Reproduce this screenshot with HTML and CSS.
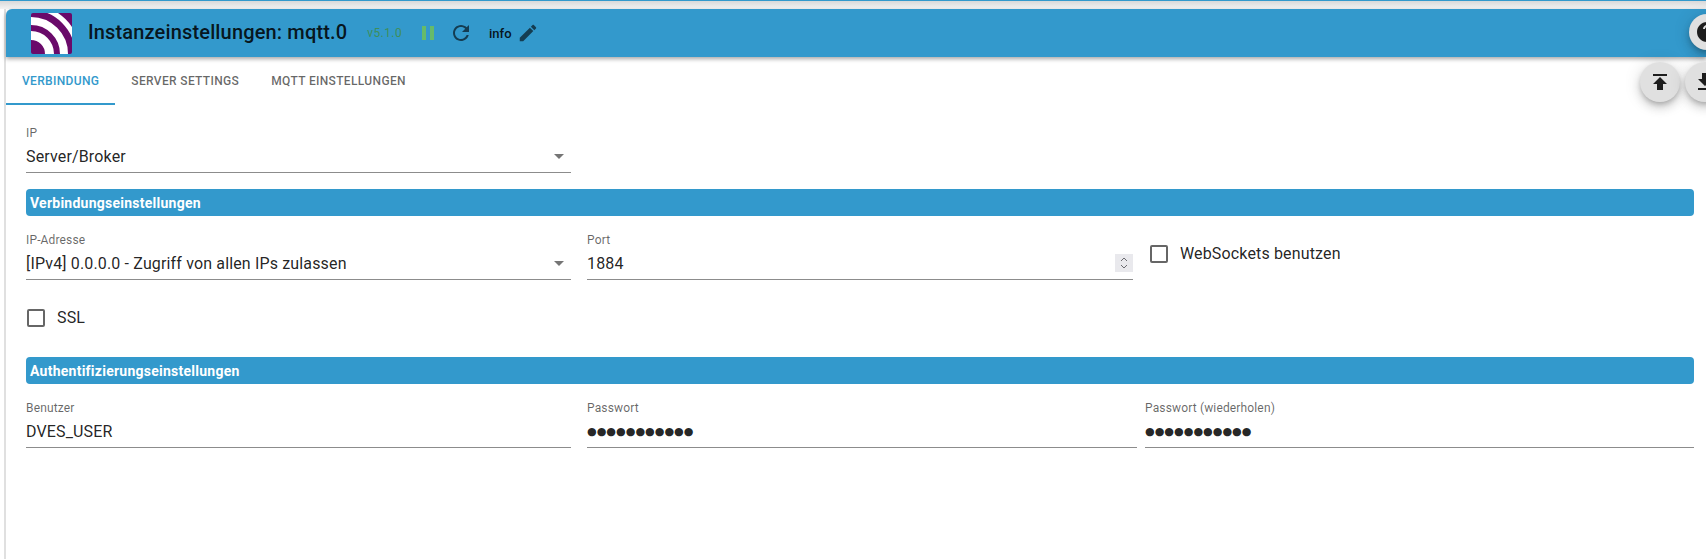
FILE: index.html
```html
<!DOCTYPE html>
<html lang="de">
<head>
  <meta charset="UTF-8">
  <title>Instanzeinstellungen: mqtt.0</title>
  <link rel="stylesheet" href="styles.css">
</head>
<body>
  <div class="top-strip"></div>

  <div class="dialog">
    <header class="title-bar">
      <svg class="logo" viewBox="0 0 41 41">
        <rect width="41" height="41" rx="2" fill="#6a0a6a"/>
        <path d="M0 22.500a18.500 18.500 0 0 1 18.500 18.500" fill="none" stroke="#fff" stroke-width="9"/>
        <path d="M0 8a33 33 0 0 1 33 33" fill="none" stroke="#fff" stroke-width="8"/>
        <path d="M0 -5.500a46.500 46.500 0 0 1 46.500 46.500" fill="none" stroke="#fff" stroke-width="5"/>
      </svg>
      <h1 class="title">Instanzeinstellungen: mqtt.0</h1>
      <span class="version">v5.1.0</span>
      <svg class="icon icon-pause" viewBox="0 0 24 24"><path d="M6 19h4V5H6v14zm8-14v14h4V5h-4z"/></svg>
      <svg class="icon icon-reload" viewBox="0 0 24 24"><path d="M17.650 6.350C16.200 4.900 14.210 4 12 4c-4.420 0-7.990 3.580-7.990 8s3.570 8 7.990 8c3.730 0 6.840-2.550 7.730-6h-2.080c-.82 2.330-3.040 4-5.650 4-3.310 0-6-2.690-6-6s2.690-6 6-6c1.660 0 3.140.69 4.220 1.780L13 11h7V4l-2.350 2.350z"/></svg>
      <span class="log-level">info</span>
      <svg class="icon icon-edit" viewBox="0 0 24 24"><path d="M3 17.250V21h3.750L17.810 9.940l-3.750-3.750L3 17.250zM20.710 7.040c.39-.39.39-1.020 0-1.410l-2.340-2.340c-.39-.39-1.020-.39-1.410 0l-1.830 1.830 3.750 3.750 1.830-1.830z"/></svg>
    </header>

    <nav class="tabs">
      <div class="tab active">Verbindung</div>
      <div class="tab">Server settings</div>
      <div class="tab">MQTT Einstellungen</div>
    </nav>

    <main class="content">
      <div class="row row-single">
        <div class="field">
          <label>IP</label>
          <div class="value select">Server/Broker</div>
        </div>
      </div>

      <div class="section-bar">Verbindungseinstellungen</div>

      <div class="row row-conn">
        <div class="field">
          <label>IP-Adresse</label>
          <div class="value select">[IPv4] 0.0.0.0 - Zugriff von allen IPs zulassen</div>
        </div>
        <div class="field">
          <label>Port</label>
          <div class="value">1884
            <span class="spinner">
              <svg viewBox="0 0 10 18"><path d="M2 7l3-3 3 3M2 11l3 3 3-3" fill="none" stroke="#6b6b70" stroke-width="1"/></svg>
            </span>
          </div>
        </div>
        <div class="check check-ws"><span class="box"></span>WebSockets benutzen</div>
      </div>

      <div class="check check-ssl"><span class="box"></span>SSL</div>

      <div class="section-bar">Authentifizierungseinstellungen</div>

      <div class="row row-auth">
        <div class="field">
          <label>Benutzer</label>
          <div class="value">DVES_USER</div>
        </div>
        <div class="field">
          <label>Passwort</label>
          <div class="value dots">●●●●●●●●●●●</div>
        </div>
        <div class="field">
          <label>Passwort (wiederholen)</label>
          <div class="value dots">●●●●●●●●●●●</div>
        </div>
      </div>
    </main>
  </div>

  <button class="fab fab-help"><svg viewBox="0 0 24 24"><path d="M12 2C6.480 2 2 6.480 2 12s4.480 10 10 10 10-4.480 10-10S17.520 2 12 2zm1 17h-2v-2h2v2zm2.070-7.750l-.9.920C13.450 12.900 13 13.500 13 15h-2v-.5c0-1.100.45-2.100 1.170-2.830l1.240-1.260c.37-.36.59-.86.59-1.410 0-1.100-.9-2-2-2s-2 .9-2 2H8c0-2.210 1.790-4 4-4s4 1.790 4 4c0 .88-.36 1.680-.93 2.250z"/></svg></button>
  <button class="fab fab-upload"><svg viewBox="0 0 24 24"><path d="M5 4v2h14V4H5zm0 10h4v6h6v-6h4l-7-7-7 7z"/></svg></button>
  <button class="fab fab-download"><svg viewBox="0 0 24 24"><path d="M19 9h-4V3H9v6H5l7 7 7-7zM5 18v2h14v-2H5z"/></svg></button>
</body>
</html>
```

FILE: styles.css
```css
html, body {
  margin: 0;
  height: 100%;
  overflow: hidden;
  background: white;
  font-family: Roboto, 'Liberation Sans', sans-serif;
  color: rgba(0, 0, 0, 0.87);
}

.top-strip {
  height: 9px;
  box-sizing: border-box;
  border-top: 1px solid #3399cc;
  background: linear-gradient(#d9d9d9, #f4f4f4);
}

.dialog {
  margin-left: 4px;
  height: 550px;
  border-left: 2px solid #e0e0e0;
}

.title-bar {
  display: flex;
  align-items: center;
  height: 48px;
  background: #3399cc;
  border-top-left-radius: 6px;
  box-shadow: 0 2px 4px rgba(0, 0, 0, 0.35);
  position: relative;
}

.logo {
  width: 41px;
  height: 41px;
  margin-left: 25px;
}

.title {
  margin: 0 0 2px 16px;
  font-size: 20px;
  font-weight: 500;
  letter-spacing: 0.15px;
  color: rgba(0, 0, 0, 0.87);
}

.version {
  margin-left: 20px;
  font-size: 12px;
  letter-spacing: 0.4px;
  color: #3f8f5a;
}

.icon {
  width: 24px;
  height: 24px;
  fill: rgba(0, 0, 0, 0.6);
}

.icon-pause {
  margin-left: 14px;
  fill: #66bb6a;
}

.icon-reload {
  margin-left: 9px;
}

.log-level {
  margin-left: 16px;
  font-size: 13px;
  font-weight: 500;
}

.icon-edit {
  width: 22px;
  height: 22px;
  margin-left: 5px;
}

.tabs {
  display: flex;
  height: 48px;
}

.tab {
  padding: 0 16px;
  line-height: 48px;
  font-size: 12px;
  font-weight: 500;
  letter-spacing: 0.34px;
  text-transform: uppercase;
  color: rgba(0, 0, 0, 0.6);
  box-sizing: border-box;
}

.tab.active {
  color: #3399cc;
  border-bottom: 2px solid #3399cc;
}

.content {
  padding: 21px 12px 0 20px;
}

.row {
  display: grid;
}

.row-single {
  grid-template-columns: 545px;
}

.row-conn {
  grid-template-columns: 545px 546px auto;
  column-gap: 16px;
  margin-top: 17px;
}

.row-auth {
  grid-template-columns: 553px 550px 549px;
  column-gap: 8px;
  margin-top: 17px;
}

.row-auth .field:first-child {
  padding-right: 8px;
}

.field label {
  display: block;
  font-size: 12px;
  line-height: 14px;
  letter-spacing: 0.15px;
  color: rgba(0, 0, 0, 0.6);
}

.value {
  position: relative;
  height: 29px;
  margin-top: 3px;
  font-size: 16px;
  line-height: 27px;
  letter-spacing: 0.15px;
  border-bottom: 1px solid #8c8c8c;
}

.select::after {
  content: "";
  position: absolute;
  right: 7px;
  top: 11px;
  border-left: 5px solid transparent;
  border-right: 5px solid transparent;
  border-top: 5px solid rgba(0, 0, 0, 0.54);
}

.dots {
  font-family: 'DejaVu Sans', sans-serif;
  font-size: 11.100px;
  letter-spacing: 0;
}

.spinner {
  position: absolute;
  right: 0;
  top: 4px;
  width: 18px;
  height: 18px;
  background: #e9e9ed;
  display: flex;
  justify-content: center;
}

.spinner svg {
  width: 10px;
  height: 18px;
}

.section-bar {
  height: 27px;
  margin-top: 16px;
  padding-left: 4px;
  line-height: 28px;
  font-size: 14px;
  font-weight: 700;
  letter-spacing: 0.25px;
  color: white;
  background: #3399cc;
  border-radius: 4px;
}

.check {
  display: flex;
  align-items: center;
  font-size: 16px;
  letter-spacing: 0.15px;
}

.box {
  width: 14px;
  height: 14px;
  margin-right: 12px;
  border: 2px solid rgba(0, 0, 0, 0.6);
  border-radius: 2px;
}

.check-ws {
  align-self: start;
  margin: 11px 0 0 1px;
}

.check-ssl {
  margin: 28px 0 30px 1px;
}

.fab {
  position: absolute;
  padding: 0;
  border: none;
  border-radius: 50%;
  background: #e0e0e0;
  display: flex;
  align-items: center;
  justify-content: center;
  box-shadow: 0 3px 5px -1px rgba(0, 0, 0, 0.2), 0 6px 10px 0 rgba(0, 0, 0, 0.14), 0 1px 18px 0 rgba(0, 0, 0, 0.12);
}

.fab svg {
  width: 24px;
  height: 24px;
  flex: none;
  fill: rgba(0, 0, 0, 0.87);
}

.fab-help {
  left: 1689px;
  top: 14px;
  width: 36px;
  height: 36px;
}

.fab-upload {
  left: 1640px;
  top: 62px;
  width: 40px;
  height: 40px;
}

.fab-download {
  left: 1685px;
  top: 62px;
  width: 40px;
  height: 40px;
}
```
